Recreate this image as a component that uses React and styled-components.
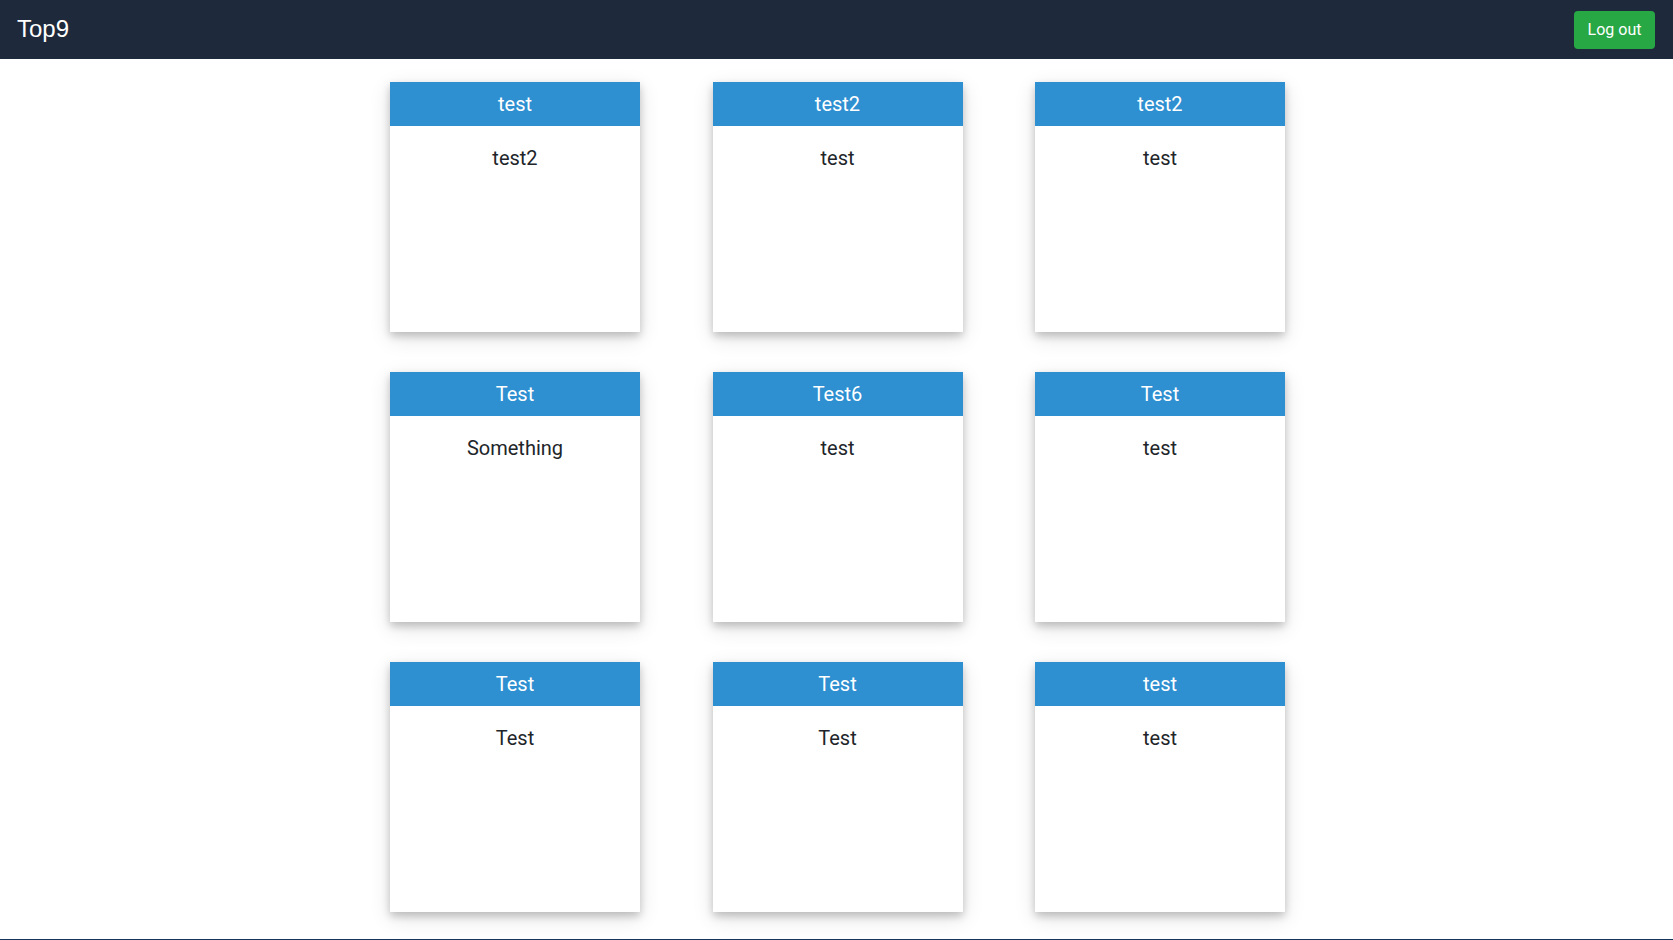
import styled, { createGlobalStyle } from 'styled-components'

const cards = [
    { title: 'test', body: 'test2' },
    { title: 'test2', body: 'test' },
    { title: 'test2', body: 'test' },
    { title: 'Test', body: 'Something' },
    { title: 'Test6', body: 'test' },
    { title: 'Test', body: 'test' },
    { title: 'Test', body: 'Test' },
    { title: 'Test', body: 'Test' },
    { title: 'test', body: 'test' },
]

export default function App() {
    return (
        <>
            <Global />
            <Nav>
                <Brand>Top9</Brand>
                <LogoutBtn>Log out</LogoutBtn>
            </Nav>
            <Grid>
                {cards.map((c, i) => (
                    <Card key={i}>
                        <CardHead>{c.title}</CardHead>
                        <CardBody>{c.body}</CardBody>
                    </Card>
                ))}
            </Grid>
            <Footer />
        </>
    )
}

const Global = createGlobalStyle`
    body {
        margin: 0;
        background: #fff;
        font-family: Roboto, "Noto Sans", sans-serif;
        color: #212529;
    }
`

const Nav = styled.div`
    height: 59px;
    background-color: #1e293b;
    display: flex;
    align-items: center;
    justify-content: space-between;
    padding: 0 18px 0 17px;
    box-sizing: border-box;
`

const Brand = styled.div`
    font-family: "Liberation Sans", Arial, sans-serif;
    font-size: 24px;
    color: #fff;
    margin-top: -1px;
`

const LogoutBtn = styled.button`
    width: 81px;
    height: 38px;
    border: none;
    border-radius: 4px;
    background-color: #28a745;
    color: #fff;
    font-family: Roboto, sans-serif;
    font-size: 16px;
    padding: 0;
`

const Grid = styled.div`
    display: grid;
    grid-template-columns: repeat(3, 250px);
    column-gap: 72.5px;
    row-gap: 40px;
    justify-content: center;
    padding: 23px 0 27px 2px;
`

const Card = styled.div`
    width: 250px;
    height: 250px;
    background: #fff;
    box-shadow: 0 4px 8px 0 rgba(0, 0, 0, 0.2), 0 6px 20px 0 rgba(0, 0, 0, 0.12);
    display: flex;
    flex-direction: column;
`

const CardHead = styled.div`
    height: 44px;
    background-color: #2e8fd1;
    color: #fff;
    font-size: 20px;
    display: flex;
    align-items: center;
    justify-content: center;
`

const CardBody = styled.div`
    padding-top: 20px;
    font-size: 20px;
    text-align: center;
    line-height: 24px;
`

const Footer = styled.div`
    height: 40px;
    background-color: #16375a;
`
